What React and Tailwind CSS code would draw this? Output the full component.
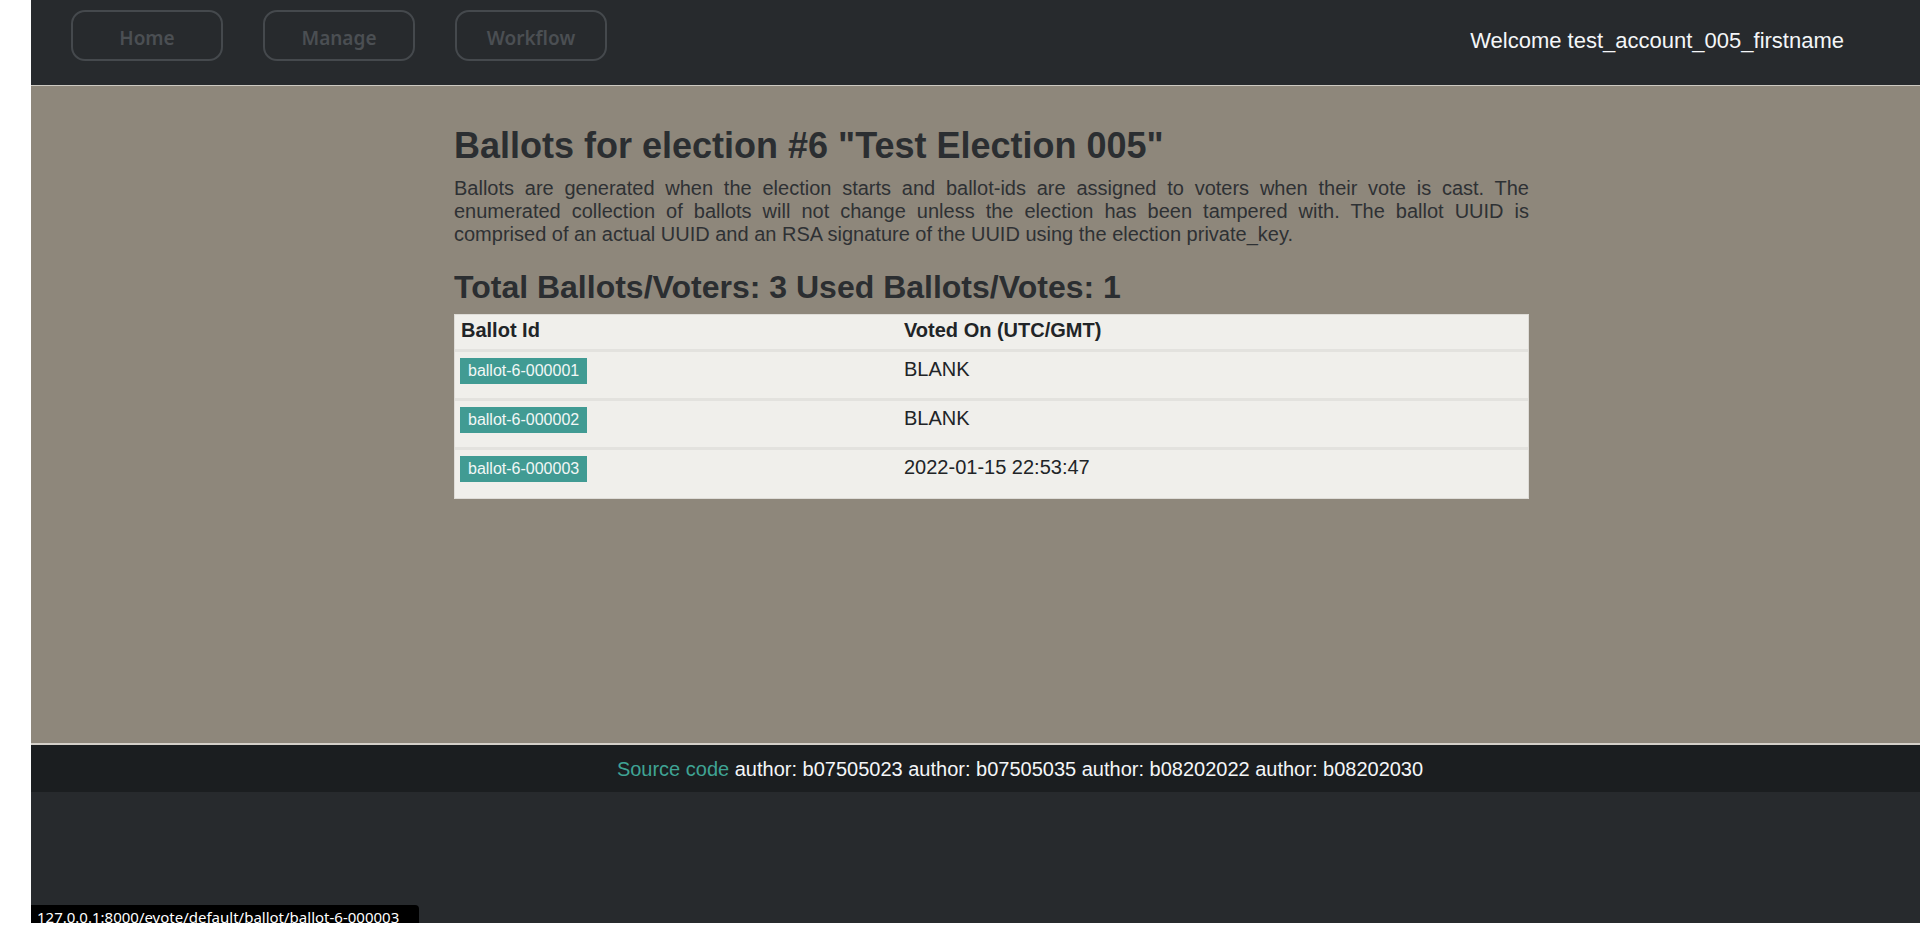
import React from "react";

const rows = [
  { id: "ballot-6-000001", voted: "BLANK" },
  { id: "ballot-6-000002", voted: "BLANK" },
  { id: "ballot-6-000003", voted: "2022-01-15 22:53:47" },
];

function NavButton({ label }) {
  return (
    <div className="w-[152px] h-[51px] rounded-[14px] border-2 border-[#45494d] flex items-center justify-center pt-[5px] font-['Noto_Sans',sans-serif] font-semibold text-[19px] text-[#4b4f53]">
      {label}
    </div>
  );
}

export default function App() {
  return (
    <div className="w-[1920px] h-[938px] bg-white flex font-['Liberation_Sans',Arial,sans-serif]">
      <div className="w-[31px] shrink-0" />
      <div className="relative flex-1 flex flex-col h-[923px] bg-[#272a2d] overflow-hidden">
        <header className="h-[86px] shrink-0 border-b border-[#cdc9c1] flex items-start justify-between pl-[40px] pr-[76px]">
          <nav className="flex gap-[40px] pt-[10px]">
            <NavButton label="Home" />
            <NavButton label="Manage" />
            <NavButton label="Workflow" />
          </nav>
          <div className="mt-[28px] text-[22px] leading-[25px] text-[#f4f6f8]">
            Welcome test_account_005_firstname
          </div>
        </header>

        <main className="h-[659px] shrink-0 bg-[#8e877b] border-b-2 border-[#d4d0c9]">
          <div className="ml-[423px] w-[1075px] pt-[38px] text-[#2b2e31]">
            <h2 className="text-[36px] leading-[43px] font-bold">
              Ballots for election #6 "Test Election 005"
            </h2>
            <p className="mt-[10px] text-[20px] leading-[23px] text-justify text-[#2e3134]">
              Ballots are generated when the election starts and ballot-ids are assigned to voters when their vote is cast. The enumerated collection of ballots will not change unless the election has been tampered with. The ballot UUID is comprised of an actual UUID and an RSA signature of the UUID using the election private_key.
            </p>
            <h3 className="mt-[22px] text-[32px] leading-[38px] font-bold">
              Total Ballots/Voters: 3 Used Ballots/Votes: 1
            </h3>
            <div className="mt-[8px] border border-[#dedcd7] bg-[#f0efeb] text-[#212427] text-[20px] leading-[23px]">
              <div className="flex h-[37px] border-b-[3px] border-[#e3e2de] font-bold">
                <div className="w-[443px] pl-[6px] pt-[4px]">Ballot Id</div>
                <div className="flex-1 pl-[6px] pt-[4px]">Voted On (UTC/GMT)</div>
              </div>
              {rows.map((r, i) => (
                <div
                  key={r.id}
                  className={
                    i < rows.length - 1
                      ? "flex h-[49px] border-b-[3px] border-[#e3e2de]"
                      : "flex h-[48px]"
                  }
                >
                  <div className="w-[443px] pl-[5px] pt-[6px]">
                    <span className="inline-block h-[26px] leading-[26px] px-[8px] bg-[#419b93] text-[16px] text-[#f2f7f6]">
                      {r.id}
                    </span>
                  </div>
                  <div className="flex-1 pl-[6px] pt-[6px]">{r.voted}</div>
                </div>
              ))}
            </div>
          </div>
        </main>

        <footer className="h-[47px] shrink-0 bg-[#1b1e20] flex items-center justify-center pl-[89px] text-[20px] text-[#f4f6f8]">
          <span>
            <span className="text-[#3fa394]">Source code</span> author: b07505023 author: b07505035 author: b08202022 author: b08202030
          </span>
        </footer>

        <div className="flex-1" />

        <div className="absolute left-0 bottom-0 h-[18px] overflow-hidden bg-black rounded-tr-[4px] pl-[6px] pr-[20px] font-['Noto_Sans',sans-serif] text-[15px] leading-[24px] text-white whitespace-nowrap">
          127.0.0.1:8000/evote/default/ballot/ballot-6-000003
        </div>
      </div>
    </div>
  );
}
